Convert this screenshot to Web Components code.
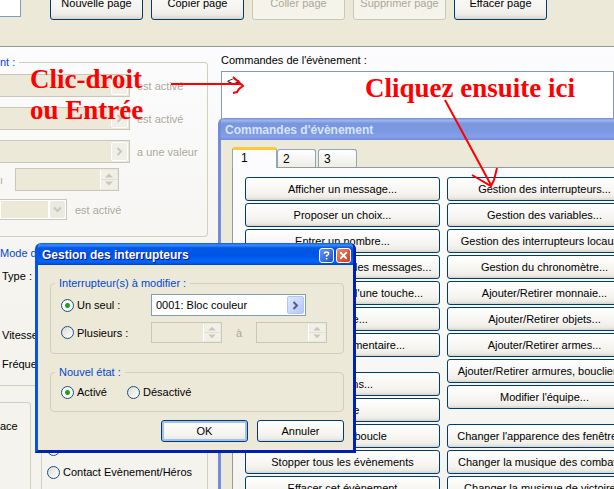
<!DOCTYPE html>
<html lang="fr">
<head>
<meta charset="utf-8">
<title>Gestion des interrupteurs</title>
<style>
    body {
        margin: 0;
        min-height: 100vh;
        position: relative;
        overflow: hidden;
        background: #ece9d8;
        color: #000;
        font: 11px/14px "Liberation Sans", Arial, sans-serif;
    }
    event-page { height: 100vh; }
    /* windows on the desktop */
    #commands { position: absolute; left: 218px; top: 118px; width: 440px; height: 400px; }
    #switches { position: absolute; left: 35px; top: 243px; width: 321px; }
    /* hand-made annotations over everything */
    red-note { position: absolute; }
    #note-left { left: 30px; top: 64px; }
    #note-right { left: 365px; top: 73px; }
    red-arrows { position: absolute; left: 0; top: 0; }
</style>
</head>
<body>
    <event-page></event-page>

    <xp-window id="commands" heading="Commandes d'évènement" inactive>
        <command-tabs></command-tabs>
    </xp-window>

    <xp-window id="switches" heading="Gestion des interrupteurs" closable>
        <switch-form></switch-form>
    </xp-window>

    <red-note id="note-left">Clic-droit<br>ou Entrée</red-note>
    <red-note id="note-right">Cliquez ensuite ici</red-note>
    <red-arrows></red-arrows>

<script>
// Attach an open shadow root and fill it with the markup
function render(el, html) {
    el.attachShadow({mode: 'open'});
    const template = document.createElement('template');
    template.innerHTML = html;
    el.shadowRoot.appendChild(template.content.cloneNode(true));
}

const CHEVRON_RIGHT = '<svg width="9" height="9" viewBox="0 0 9 9"><path d="M2.5 1 L6 4.5 L2.5 8" fill="none" stroke="currentColor" stroke-width="2"/></svg>';
const CHEVRON_DOWN = '<svg width="9" height="9" viewBox="0 0 9 9"><path d="M1 2.5 L4.5 6 L8 2.5" fill="none" stroke="currentColor" stroke-width="2"/></svg>';

class XpButton extends HTMLElement {
    constructor() {
        super();
        render(this, `
            <style>
                :host { display: block; height: 24px; }
                button {
                    box-sizing: border-box;
                    width: 100%;
                    height: 100%;
                    padding: 0;
                    border: 1px solid #003c74;
                    border-radius: 3px;
                    background: linear-gradient(#ffffff, #f4f3ee 70%, #ecebe5 88%, #d8d3c8);
                    color: #000;
                    font: inherit;
                    white-space: nowrap;
                    overflow: hidden;
                }
                :host([default]) button { box-shadow: inset 0 0 0 2px #a6c0ee; }
                button:disabled {
                    border-color: #c9c7ba;
                    background: #f5f4ea;
                    color: #aca899;
                }
            </style>
            <button type="button"><slot></slot></button>
        `);
        this.shadowRoot.querySelector('button').disabled = this.hasAttribute('disabled');
    }
}

class XpGroup extends HTMLElement {
    constructor() {
        super();
        const heading = this.getAttribute('heading');
        render(this, `
            <style>
                :host { display: block; }
                fieldset {
                    box-sizing: border-box;
                    height: 100%;
                    min-width: 0;
                    margin: 0;
                    padding: var(--group-padding, 4px 10px 10px);
                    border: 1px solid #d0d0bf;
                    border-radius: 4px;
                }
                legend {
                    margin-left: -6px;
                    padding: 0 4px;
                    color: #0046d5;
                    white-space: nowrap;
                }
                :host([cut]) fieldset { border-left: 0; border-radius: 0 4px 4px 0; }
                :host([cut]) legend { margin-left: var(--legend-start, 0); padding-left: 0; }
            </style>
            <fieldset>${heading ? `<legend>${heading}</legend>` : ''}<slot></slot></fieldset>
        `);
    }
}

class XpRadio extends HTMLElement {
    constructor() {
        super();
        render(this, `
            <style>
                :host { display: block; }
                label { display: flex; align-items: center; gap: 3px; white-space: nowrap; }
                input {
                    appearance: none;
                    flex: none;
                    box-sizing: border-box;
                    width: 13px;
                    height: 13px;
                    margin: 0;
                    border: 1px solid #1c5180;
                    border-radius: 50%;
                    background: linear-gradient(135deg, #dcdcd7, #ffffff);
                }
                input:checked {
                    background: radial-gradient(circle, #21a121 0 2px, #fbfbf9 3px);
                }
            </style>
            <label><input type="radio"><slot></slot></label>
        `);
        this.shadowRoot.querySelector('input').checked = this.hasAttribute('checked');
    }
}

class XpPicker extends HTMLElement {
    constructor() {
        super();
        render(this, `
            <style>
                :host {
                    display: flex;
                    box-sizing: border-box;
                    height: 22px;
                    padding: 1px;
                    border: 1px solid #7f9db9;
                    background: #fff;
                }
                input {
                    flex: 1;
                    min-width: 0;
                    padding: 0 0 0 3px;
                    border: 0;
                    background: none;
                    color: inherit;
                    font: inherit;
                }
                button {
                    display: grid;
                    place-items: center;
                    width: 17px;
                    padding: 0;
                    border: 1px solid #b5c5ef;
                    border-radius: 2px;
                    background: linear-gradient(135deg, #dfe8fe, #b4c8f6);
                    color: #4d6185;
                }
                :host([disabled]) {
                    height: 23px;
                    border-color: #c9c7ba;
                    background: #ece9d8;
                }
                :host([disabled]) button {
                    border-color: #fff;
                    background: #f1f0e8;
                    color: #c9c7ba;
                }
                :host([cut]) { border-left: 0; }
            </style>
            <input type="text" readonly aria-label="Interrupteur">
            <button type="button" aria-label="Choisir">${CHEVRON_RIGHT}</button>
        `);
        const disabled = this.hasAttribute('disabled');
        this.shadowRoot.querySelector('input').value = this.getAttribute('value') || '';
        this.shadowRoot.querySelector('input').disabled = disabled;
        this.shadowRoot.querySelector('button').disabled = disabled;
    }
}

class XpSpin extends HTMLElement {
    constructor() {
        super();
        render(this, `
            <style>
                :host {
                    display: flex;
                    box-sizing: border-box;
                    height: 21px;
                    padding: 1px;
                    border: 1px solid #c9c7ba;
                    background: #ece9d8;
                }
                input {
                    appearance: textfield;
                    flex: 1;
                    min-width: 0;
                    padding: 0;
                    border: 0;
                    background: none;
                    font: inherit;
                }
                svg {
                    width: 16px;
                    height: 100%;
                    background: #f1f0e8;
                    border-left: 1px solid #fff;
                }
            </style>
            <input type="number" disabled aria-label="Valeur">
            <svg viewBox="0 0 16 18" preserveAspectRatio="xMidYMid meet">
                <path d="M0 9 H16" stroke="#e0decf"/>
                <path d="M4 7 L8 3 L12 7 Z M4 11 L8 15 L12 11 Z" fill="#c9c7ba"/>
            </svg>
        `);
    }
}

class XpSelect extends HTMLElement {
    constructor() {
        super();
        render(this, `
            <style>
                :host {
                    display: flex;
                    box-sizing: border-box;
                    height: 21px;
                    padding: 1px;
                    border: 1px solid #c9c7ba;
                    border-left: 0;
                    background: #fff;
                }
                select {
                    appearance: none;
                    flex: 1;
                    min-width: 0;
                    border: 0;
                    background: #ece9d8;
                    font: inherit;
                    opacity: 1;
                }
                span {
                    display: grid;
                    place-items: center;
                    width: 15px;
                    margin-left: 2px;
                    border-radius: 2px;
                    background: #ebeae0;
                    color: #c9c7ba;
                }
            </style>
            <select disabled aria-label="Interrupteur local"><option></option></select>
            <span>${CHEVRON_DOWN}</span>
        `);
    }
}

class XpWindow extends HTMLElement {
    constructor() {
        super();
        const buttons = `
            <button type="button" aria-label="Aide">
                <svg width="14" height="14" viewBox="0 0 14 14"><path d="M4.8 5 Q4.8 3.3 7 3.3 Q9.3 3.3 9.3 5 Q9.3 6.2 7.1 7.2 V8.4 M7.1 9.6 V11.2" fill="none" stroke="#fff" stroke-width="1.6"/></svg>
            </button>
            <button type="button" class="close" aria-label="Fermer">
                <svg width="14" height="14" viewBox="0 0 14 14"><path d="M3.5 3.5 L10.5 10.5 M10.5 3.5 L3.5 10.5" stroke="#fff" stroke-width="2"/></svg>
            </button>`;
        render(this, `
            <style>
                :host {
                    display: flex;
                    flex-direction: column;
                    box-sizing: border-box;
                    border: 3px solid #0831d9;
                    border-color: #0855dd #0020b0 #0020b0 #0855dd;
                    border-top: 0;
                    border-radius: 6px 6px 0 0;
                    background: #ece9d8;
                    overflow: hidden;
                }
                header {
                    display: flex;
                    align-items: center;
                    gap: 2px;
                    height: 22px;
                    margin: 0 -3px;
                    padding: 2px 5px 0 7px;
                    box-sizing: border-box;
                    background: linear-gradient(#0a5ae0, #3c8cff 10%, #0058e6 22%, #0055e3 55%, #0066ff 85%, #0046c8);
                    color: #fff;
                    text-shadow: 1px 1px #0f1089;
                }
                h1 { flex: 1; margin: 0; font: bold 12px/14px "Liberation Sans", Arial, sans-serif; white-space: nowrap; }
                button {
                    box-sizing: border-box;
                    width: 15px;
                    height: 15px;
                    padding: 0;
                    border: 1px solid #fff;
                    border-radius: 3px;
                    background: linear-gradient(135deg, #6a94f4, #1c4fd8);
                    line-height: 0;
                    overflow: hidden;
                }
                button svg { display: block; width: 13px; height: 13px; }
                .close { background: linear-gradient(135deg, #f0866a, #d0381a); }
                :host([inactive]) { border-color: #758be0; }
                :host([inactive]) header {
                    background: linear-gradient(#7088d8, #9db6f0 10%, #7a96df 25%, #7b98e2 60%, #84a0ea 85%, #7288d8);
                    color: #d8e4f8;
                    text-shadow: none;
                }
            </style>
            <header>
                <h1>${this.getAttribute('heading')}</h1>
                ${this.hasAttribute('closable') ? buttons : ''}
            </header>
            <slot></slot>
        `);
    }
}

class SwitchForm extends HTMLElement {
    constructor() {
        super();
        render(this, `
            <style>
                :host { display: flex; flex-direction: column; padding: 11px 9px 8px 12px; }
                .choice { display: grid; grid-template-columns: 90px 1fr; row-gap: 6px; align-items: center; }
                xp-picker { width: 155px; }
                .range { display: flex; align-items: center; gap: 14px; color: #aca899; }
                .range xp-spin { width: 71px; }
                #which { --group-padding: 4px 10px 10px; }
                #state { --group-padding: 6px 10px 12px; margin-top: 11px; }
                .states { display: flex; gap: 20px; }
                footer { display: flex; justify-content: flex-end; gap: 9px; margin-top: 8px; }
                footer xp-button { width: 87px; height: 22px; }
            </style>
            <xp-group id="which" heading="Interrupteur(s) à modifier :">
                <div class="choice">
                    <xp-radio checked>Un seul :</xp-radio>
                    <xp-picker value="0001: Bloc couleur"></xp-picker>
                    <xp-radio>Plusieurs :</xp-radio>
                    <div class="range"><xp-spin></xp-spin>à<xp-spin></xp-spin></div>
                </div>
            </xp-group>
            <xp-group id="state" heading="Nouvel état :">
                <div class="states">
                    <xp-radio checked>Activé</xp-radio>
                    <xp-radio>Désactivé</xp-radio>
                </div>
            </xp-group>
            <footer>
                <xp-button default>OK</xp-button>
                <xp-button>Annuler</xp-button>
            </footer>
        `);
    }
}

class CommandTabs extends HTMLElement {
    constructor() {
        super();
        render(this, `
            <style>
                :host { display: flex; flex-direction: column; flex: 1; padding: 7px 11px 0; }
                nav { display: flex; align-items: flex-end; height: 20px; }
                nav button {
                    box-sizing: border-box;
                    width: 39px;
                    height: 18px;
                    margin-right: 2px;
                    padding: 0 0 0 5px;
                    border: 1px solid #91a7b4;
                    border-bottom: 0;
                    border-radius: 3px 3px 0 0;
                    background: linear-gradient(#ffffff, #eeede6);
                    color: #000;
                    font: inherit;
                    font-size: 12px;
                    text-align: left;
                }
                nav button.current {
                    width: 45px;
                    height: 21px;
                    margin: 0 0 -1px;
                    padding: 0 0 3px 8px;
                    border-top: 3px solid #ffc73c;
                    background: #fcfcfe;
                    z-index: 1;
                }
                section {
                    flex: 1;
                    display: grid;
                    grid-template-columns: 195px 195px;
                    gap: 7px;
                    padding: 9px 12px;
                    border: 1px solid #919b9c;
                    background: linear-gradient(#fcfcfe, #f4f3ee);
                }
                section div { display: flex; flex-direction: column; gap: 2px; }
                .apart { margin-top: 13px; }
            </style>
            <nav>
                <button type="button" class="current">1</button>
                <button type="button">2</button>
                <button type="button">3</button>
            </nav>
            <section>
                <div>
                    <xp-button>Afficher un message...</xp-button>
                    <xp-button>Proposer un choix...</xp-button>
                    <xp-button>Entrer un nombre...</xp-button>
                    <xp-button>Modifier les options des messages...</xp-button>
                    <xp-button>Mémoriser l'appui d'une touche...</xp-button>
                    <xp-button>Attendre...</xp-button>
                    <xp-button>Insérer un commentaire...</xp-button>
                    <xp-button class="apart">Conditions...</xp-button>
                    <xp-button>Boucle</xp-button>
                    <xp-button>Sortir de la boucle</xp-button>
                    <xp-button>Stopper tous les évènements</xp-button>
                    <xp-button>Effacer cet évènement</xp-button>
                </div>
                <div>
                    <xp-button>Gestion des interrupteurs...</xp-button>
                    <xp-button>Gestion des variables...</xp-button>
                    <xp-button>Gestion des interrupteurs locaux...</xp-button>
                    <xp-button>Gestion du chronomètre...</xp-button>
                    <xp-button>Ajouter/Retirer monnaie...</xp-button>
                    <xp-button>Ajouter/Retirer objets...</xp-button>
                    <xp-button>Ajouter/Retirer armes...</xp-button>
                    <xp-button>Ajouter/Retirer armures, boucliers...</xp-button>
                    <xp-button>Modifier l'équipe...</xp-button>
                    <xp-button class="apart">Changer l'apparence des fenêtres...</xp-button>
                    <xp-button>Changer la musique des combats...</xp-button>
                    <xp-button>Changer la musique de victoire...</xp-button>
                </div>
            </section>
        `);
    }
}

// The event editor behind the dialogs
class EventPage extends HTMLElement {
    constructor() {
        super();
        render(this, `
            <style>
                :host { display: flex; flex-direction: column; overflow: hidden; }
                .toolbar { display: flex; flex: none; gap: 8px; margin-top: -15px; padding-bottom: 26px; }
                .toolbar input {
                    box-sizing: border-box;
                    width: 21px;
                    height: 32px;
                    margin-right: 21px;
                    border: 1px solid #7f9db9;
                    border-left: 0;
                    background: #fff;
                }
                .toolbar xp-button { width: 93px; height: 35px; flex: none; }
                main {
                    flex: 1;
                    display: grid;
                    grid-template-columns: 208px 1fr;
                    column-gap: 13px;
                    border-top: 1px solid #919b9c;
                    background: linear-gradient(#fcfcfe, #f4f3ee 260px);
                }
                .left { padding-top: 8px; }
                .list { display: flex; flex-direction: column; padding-top: 6px; }
                .list pre {
                    flex: 1;
                    margin: 4px 0 0;
                    padding: 2px 5px;
                    border: 1px solid #7f9db9;
                    background: #fff;
                    font: inherit;
                }
                #conditions { --group-padding: 5px 0 16px; }
                .rows { display: flex; flex-direction: column; gap: 10px; }
                .row { display: flex; align-items: center; gap: 7px; color: #aca899; text-shadow: 1px 1px #fff; }
                .row xp-picker { width: 130px; }
                .row.value { gap: 12px; margin: -5px 0 -2px; }
                .row.value xp-spin { width: 104px; height: 23px; }
                .row.local { gap: 8px; }
                .row xp-select { width: 67px; }
                #move { --group-padding: 9px 2px 14px; --legend-start: -2px; margin-top: 9px; }
                .moves { display: grid; gap: 15px; }
                .moves span:first-child { margin-bottom: 30px; }
                .bottom { display: flex; gap: 10px; margin-top: 16px; }
                #options { --group-padding: 16px 0 100px; width: 31px; }
                #trigger { --group-padding: 16px 5px 10px; flex: 1; }
                .triggers { display: grid; gap: 9px; }
            </style>
            <div class="toolbar">
                <input type="text" aria-label="Nom">
                <xp-button>Nouvelle page</xp-button>
                <xp-button>Copier page</xp-button>
                <xp-button disabled>Coller page</xp-button>
                <xp-button disabled>Supprimer page</xp-button>
                <xp-button>Effacer page</xp-button>
            </div>
            <main>
                <div class="left">
                    <xp-group id="conditions" heading="nt :" cut>
                        <div class="rows">
                            <div class="row"><xp-picker disabled cut></xp-picker>est activé</div>
                            <div class="row"><xp-picker disabled cut></xp-picker>est activé</div>
                            <div class="row"><xp-picker disabled cut></xp-picker>a une valeur</div>
                            <div class="row value">ı<xp-spin></xp-spin></div>
                            <div class="row local"><xp-select></xp-select>est activé</div>
                        </div>
                    </xp-group>
                    <xp-group id="move" heading="Mode de déplacement :" cut>
                        <div class="moves">
                            <span>Type :</span>
                            <span>Vitesse :</span>
                            <span>Fréquence :</span>
                        </div>
                    </xp-group>
                    <div class="bottom">
                        <xp-group id="options" cut>ace</xp-group>
                        <xp-group id="trigger">
                            <div class="triggers">
                                <xp-radio>Touche Action</xp-radio>
                                <xp-radio>Contact Héros</xp-radio>
                                <xp-radio>Contact Evènement/Héros</xp-radio>
                                <xp-radio>Automatique</xp-radio>
                            </div>
                        </xp-group>
                    </div>
                </div>
                <div class="list">
                    <span>Commandes de l'évènement :</span>
                    <pre>&lt;&gt;</pre>
                </div>
            </main>
        `);
    }
}

class RedNote extends HTMLElement {
    constructor() {
        super();
        render(this, `
            <style>
                :host {
                    display: block;
                    color: #f00;
                    font: bold 27px/31px "Liberation Serif", serif;
                    white-space: nowrap;
                }
            </style>
            <slot></slot>
        `);
    }
}

class RedArrows extends HTMLElement {
    constructor() {
        super();
        render(this, `
            <style>
                :host { display: block; pointer-events: none; }
                svg { display: block; }
            </style>
            <svg width="520" height="200" viewBox="0 0 520 200" fill="none" stroke="#f00" stroke-width="2">
                <path d="M171 84 H241 M233 77 L243 86 L239 89 L237 92 L233 93"/>
                <path d="M445 100 L491 185 M472 175 L491 186 L494 180 L497 168"/>
            </svg>
        `);
    }
}

window.customElements.define('xp-button', XpButton);
window.customElements.define('xp-group', XpGroup);
window.customElements.define('xp-radio', XpRadio);
window.customElements.define('xp-picker', XpPicker);
window.customElements.define('xp-spin', XpSpin);
window.customElements.define('xp-select', XpSelect);
window.customElements.define('xp-window', XpWindow);
window.customElements.define('switch-form', SwitchForm);
window.customElements.define('command-tabs', CommandTabs);
window.customElements.define('event-page', EventPage);
window.customElements.define('red-note', RedNote);
window.customElements.define('red-arrows', RedArrows);
</script>
</body>
</html>
